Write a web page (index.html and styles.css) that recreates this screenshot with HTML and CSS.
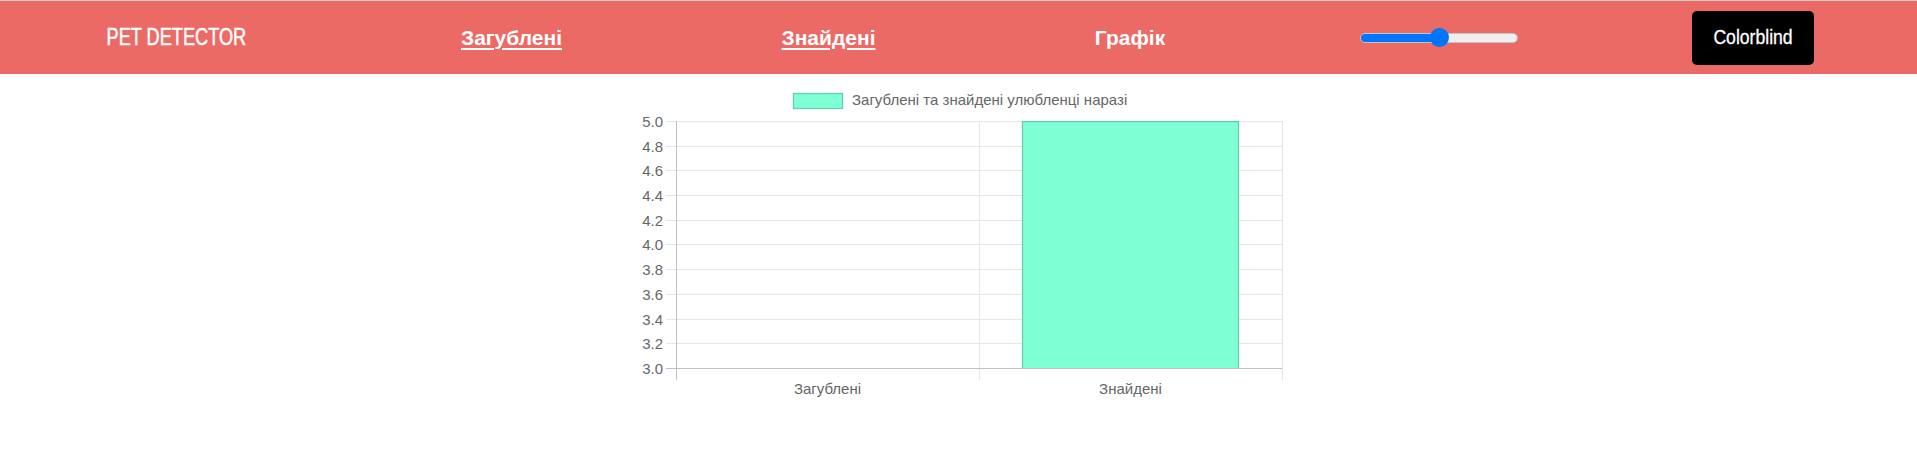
FILE: index.html
```html
<!DOCTYPE html>
<html lang="uk">
<head>
<meta charset="utf-8">
<title>Pet Detector</title>
<link rel="stylesheet" href="styles.css">
</head>
<body>
<header class="topbar">
  <div class="brand"><span class="narrow">PET DETECTOR</span></div>
  <a class="nav-link" href="#">Загублені</a>
  <a class="nav-link" href="#">Знайдені</a>
  <span class="nav-link current">Графік</span>
  <div class="slider-cell"><input class="slider" type="range" min="0" max="100" value="50" aria-label="size"></div>
  <div class="btn-cell"><button class="cb-btn" type="button"><span class="btn-text">Colorblind</span></button></div>
</header>
<main class="chart-wrap">
  <svg class="chart" width="683" height="340" viewBox="0 0 683 340" xmlns="http://www.w3.org/2000/svg">
    <!-- legend -->
    <rect x="176.5" y="19.5" width="49" height="15" fill="#7fffd4" stroke="#66cdaa" stroke-width="1.25"/>
    <text class="lbl" x="235" y="31">Загублені та знайдені улюбленці наразі</text>

    <!-- horizontal grid -->
    <g stroke="#e6e6e6" stroke-width="1">
      <line x1="49" y1="47.5" x2="665" y2="47.5"/>
      <line x1="49" y1="72.5" x2="665" y2="72.5"/>
      <line x1="49" y1="96.5" x2="665" y2="96.5"/>
      <line x1="49" y1="121.5" x2="665" y2="121.5"/>
      <line x1="49" y1="146.5" x2="665" y2="146.5"/>
      <line x1="49" y1="170.5" x2="665" y2="170.5"/>
      <line x1="49" y1="195.5" x2="665" y2="195.5"/>
      <line x1="49" y1="220.5" x2="665" y2="220.5"/>
      <line x1="49" y1="245.5" x2="665" y2="245.5"/>
      <line x1="49" y1="269.5" x2="665" y2="269.5"/>
      <line x1="362.5" y1="47" x2="362.5" y2="306"/>
      <line x1="665.5" y1="47" x2="665.5" y2="306"/>
    </g>

    <!-- bar -->
    <rect x="405.5" y="47.5" width="216" height="247" fill="#7fffd4"/>
    <path d="M405.5 294.5 V47.5 H621.5 V294.5" fill="none" stroke="#66cdaa" stroke-width="1.25"/>

    <!-- axes -->
    <g stroke="#c0c0c0" stroke-width="1">
      <line x1="49" y1="294.5" x2="665" y2="294.5"/>
      <line x1="59.5" y1="47" x2="59.5" y2="306"/>
    </g>

    <!-- y labels -->
    <g class="lbl" text-anchor="end">
      <text x="46" y="52.5">5.0</text>
      <text x="46" y="77.5">4.8</text>
      <text x="46" y="101.5">4.6</text>
      <text x="46" y="126.5">4.4</text>
      <text x="46" y="151.5">4.2</text>
      <text x="46" y="175.5">4.0</text>
      <text x="46" y="200.5">3.8</text>
      <text x="46" y="225.5">3.6</text>
      <text x="46" y="250.5">3.4</text>
      <text x="46" y="274.5">3.2</text>
      <text x="46" y="299.5">3.0</text>
    </g>

    <!-- x labels -->
    <g class="lbl" text-anchor="middle">
      <text x="210.5" y="320">Загублені</text>
      <text x="513.5" y="320">Знайдені</text>
    </g>
  </svg>
</main>
</body>
</html>
```

FILE: styles.css
```css
html, body {
  margin: 0;
  padding: 0;
  background: #ffffff;
}

body {
  font-family: "Liberation Sans", Arial, sans-serif;
}

.topbar {
  display: grid;
  grid-template-columns: 352px 319px 315px 288px 330px 298px 1fr;
  align-items: center;
  height: 73px;
  border-top: 1px solid #cfcfcf;
  background: #ec6a65;
  color: #ffffff;
  font-family: "Liberation Sans", Arial, sans-serif;
}

.brand {
  justify-self: center;
  font-size: 23px;
}

.narrow {
  display: inline-block;
  transform: scaleX(0.79);
  transform-origin: center;
  white-space: nowrap;
  -webkit-text-stroke: 0.5px #ffffff;
}

.nav-link {
  justify-self: center;
  color: #ffffff;
  font-size: 21px;
  font-weight: bold;
  text-decoration: underline;
  text-decoration-thickness: 2px;
  text-underline-offset: 3px;
}

.nav-link.current {
  text-decoration: none;
}

.slider-cell {
  justify-self: center;
  display: flex;
  align-items: center;
}

.btn-cell {
  justify-self: center;
  display: flex;
  align-items: center;
}

.slider {
  -webkit-appearance: none;
  appearance: none;
  width: 158px;
  height: 10px;
  margin: 0;
  border-radius: 5px;
  border: 1px solid #c4c4c4;
  box-sizing: border-box;
  background: linear-gradient(to right, #0075ff 0, #0075ff 50%, #efefef 50%, #efefef 100%);
}

.slider::-webkit-slider-thumb {
  -webkit-appearance: none;
  appearance: none;
  width: 19px;
  height: 19px;
  border-radius: 50%;
  background: #0075ff;
  border: none;
}

.cb-btn {
  width: 122px;
  height: 54px;
  border: none;
  border-radius: 5px;
  background: #000000;
  color: #ffffff;
  font-family: "Liberation Sans", Arial, sans-serif;
  font-size: 20px;
  padding: 0;
}

.btn-text {
  display: inline-block;
  transform: scaleX(0.88);
  transform-origin: center;
  -webkit-text-stroke: 0.3px #ffffff;
}

.chart-wrap {
  display: flex;
  justify-content: center;
}

.chart {
  display: block;
}

.lbl {
  font-family: "Liberation Sans", Arial, sans-serif;
  font-size: 15px;
  fill: #666666;
}
```
